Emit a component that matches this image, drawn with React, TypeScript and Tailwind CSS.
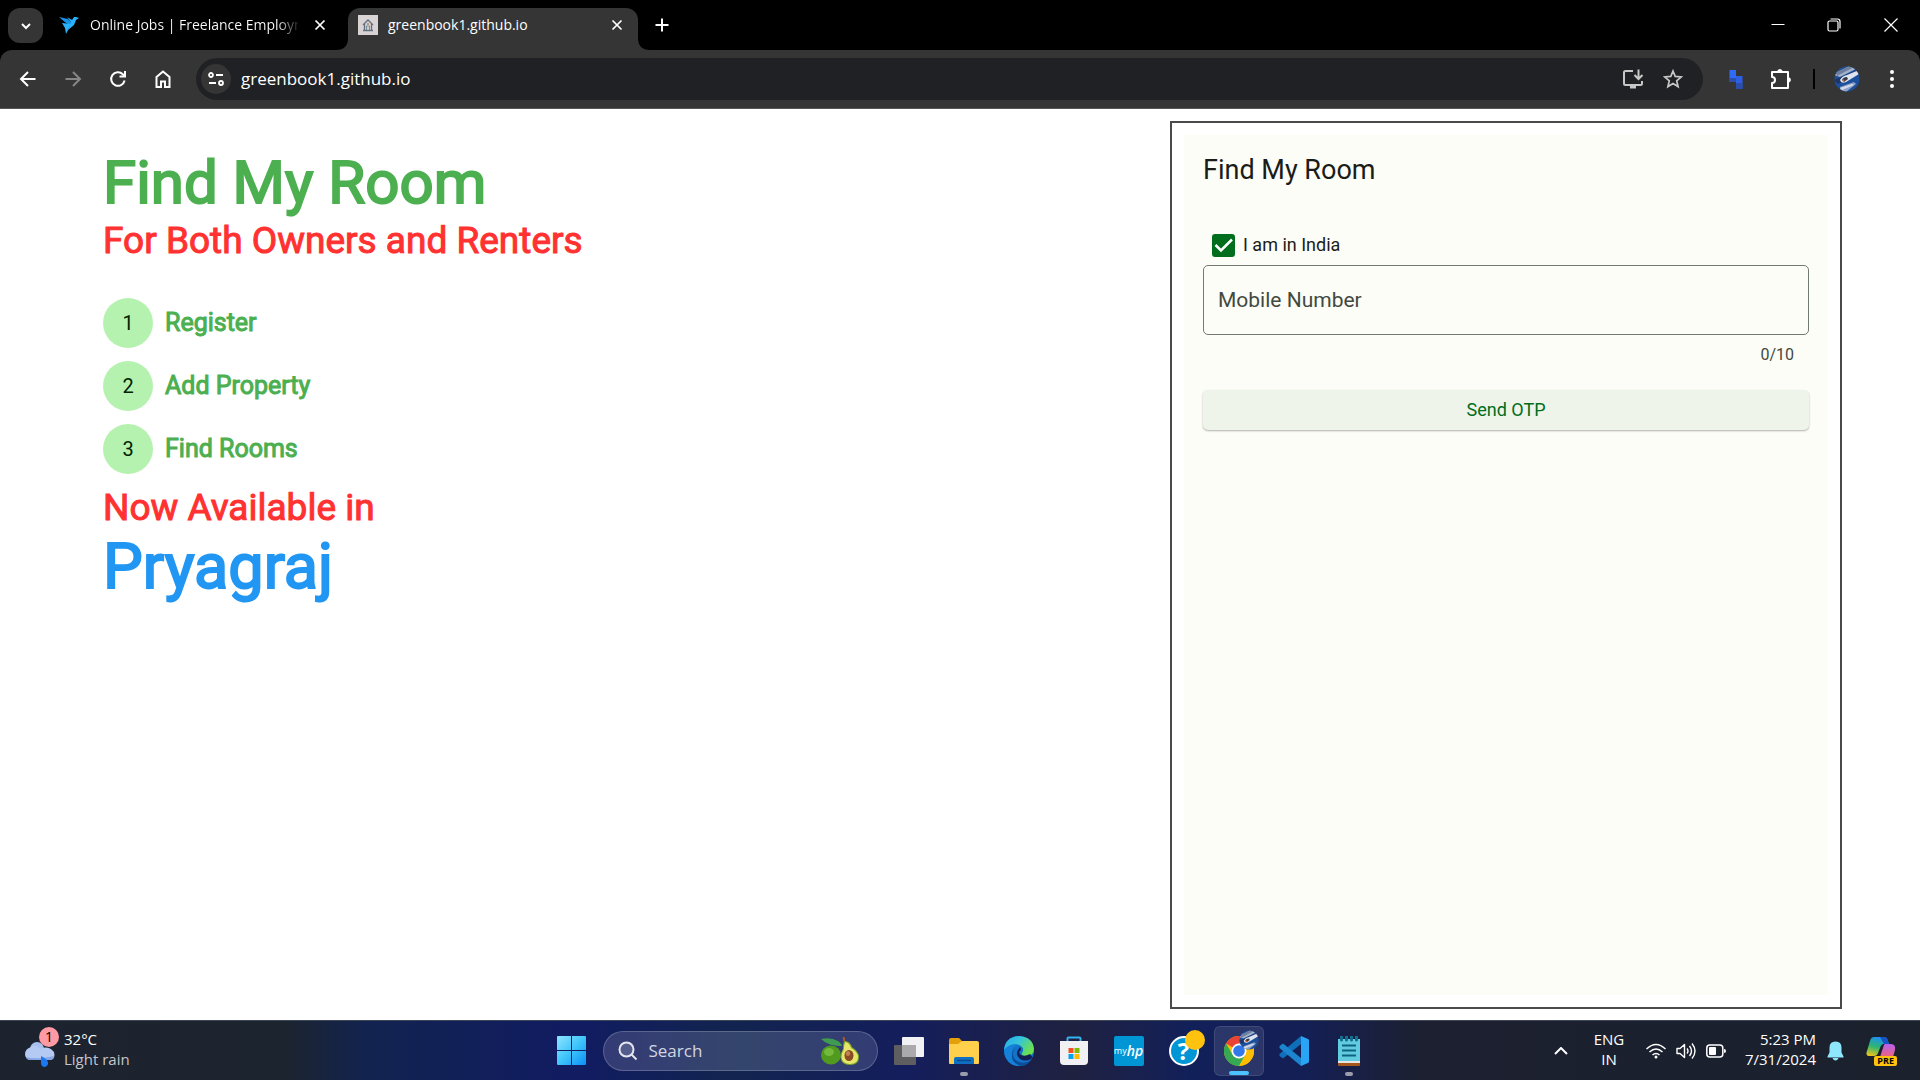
import { useState } from 'react';
import type { ReactNode } from 'react';

const steps = ['Register', 'Add Property', 'Find Rooms'];

function CloseIcon({ className }: { className?: string }) {
  return (
    <svg viewBox="0 0 12 12" className={className} fill="none" stroke="currentColor" strokeWidth="1.7">
      <path d="M1.5 1.5l9 9M10.5 1.5l-9 9" />
    </svg>
  );
}

function Avatar({ className }: { className?: string }) {
  return (
    <svg viewBox="0 0 26 26" className={className}>
      <defs>
        <clipPath id="avatar-clip">
          <circle cx="13" cy="13" r="12.5" />
        </clipPath>
      </defs>
      <g clipPath="url(#avatar-clip)">
        <rect width="26" height="26" fill="#1c4f9c" />
        <path d="M0 9L18-2l6 4L6 11z" fill="#a3b0c9" />
        <path d="M2 6L16 0l4 1L3 10z" fill="#6f7f9f" />
        <path d="M0 14L26 3v3L4 18z" fill="#1f3566" />
        <path d="M6 14q2-4 7-5l12-5v4L12 16q-5 2-6-2z" fill="#dfe4ee" />
        <path d="M8 14q1-3 5-3l1 2-4 3z" fill="#343a4a" />
        <circle cx="9.500" cy="14.500" r="1" fill="#e0632d" />
        <path d="M6 21l14-5 2 2-10 8H6z" fill="#8fa1c6" />
        <path d="M6 22l12-4 2 1-12 5z" fill="#d3dbeb" />
      </g>
    </svg>
  );
}

function TabStrip() {
  return (
    <div className="flex h-[50px] bg-black pl-2 text-white">
      <button aria-label="Search tabs" className="mt-2 flex h-[35px] w-[35px] items-center justify-center rounded-xl bg-[#353535]">
        <svg viewBox="0 0 12 12" className="h-3 w-3" fill="none" stroke="currentColor" strokeWidth="2">
          <path d="M2 4l4 4 4-4" />
        </svg>
      </button>

      <div className="ml-4 flex h-[50px] w-[289px] items-center pr-[22px]">
        <svg viewBox="0 0 20 20" className="h-5 w-5 shrink-0">
          <path d="M0 2l9 2 4 4-1 3-5-3z" fill="#1692e8" />
          <path d="M3 8l9 1-5 10-1-6z" fill="#29b2fe" />
          <path d="M8 2l5 3 2-3h2l3 1-3 2-2 5-6 5 3-8z" fill="#29b2fe" />
        </svg>
        <button className="ml-[11px] flex-1 overflow-hidden whitespace-nowrap bg-linear-to-r from-white from-90% to-[#222] bg-clip-text text-left text-sm leading-5 text-transparent">
          Online Jobs | Freelance Employm
        </button>
        <button aria-label="Close tab" className="ml-4">
          <CloseIcon className="h-3 w-3" />
        </button>
      </div>

      <div className="relative mt-2 flex h-[42px] w-[290px] items-center rounded-t-xl bg-[#353535] pb-2 pl-[10px]">
        <svg viewBox="0 0 12 12" className="absolute -left-3 bottom-0 h-3 w-3">
          <path d="M12 0v12H0Q12 12 12 0z" fill="#353535" />
        </svg>
        <svg viewBox="0 0 12 12" className="absolute -right-3 bottom-0 h-3 w-3">
          <path d="M0 0v12h12Q0 12 0 0z" fill="#353535" />
        </svg>
        <svg viewBox="0 0 20 20" className="h-5 w-5 shrink-0" fill="none">
          <rect width="20" height="20" fill="#d9d3d4" />
          <path d="M5 10l5-5 5 5M6.500 9v6M13.500 9v6M5 15.500h10" stroke="#60717f" strokeWidth="1.300" />
          <circle cx="10" cy="9" r="1" fill="#c08354" />
          <path d="M8.500 15v-4h3v4" stroke="#7b8a96" />
        </svg>
        <button className="ml-[10px] flex-1 text-left text-sm leading-5">greenbook1.github.io</button>
        <button aria-label="Close tab" className="mr-[15px]">
          <CloseIcon className="h-3 w-3" />
        </button>
      </div>

      <button aria-label="New tab" className="ml-[17px] h-[50px]">
        <svg viewBox="0 0 14 14" className="h-[14px] w-[14px]" stroke="currentColor" strokeWidth="2">
          <path d="M7 0.500v13M0.500 7h13" />
        </svg>
      </button>

      <div className="ml-auto flex h-[50px] items-center">
        <button aria-label="Minimize" className="flex h-[50px] w-14 items-center justify-center">
          <svg viewBox="0 0 14 14" className="h-[14px] w-[14px]" stroke="currentColor"><path d="M0.500 6.500h13" /></svg>
        </button>
        <button aria-label="Restore" className="flex h-[50px] w-14 items-center justify-center">
          <svg viewBox="0 0 14 14" className="h-[14px] w-[14px]" fill="none" stroke="currentColor" strokeWidth="1.200">
            <rect x="1" y="3" width="10" height="10" rx="1.500" />
            <path d="M3.500 1h7Q13 1 13 3.500v7" />
          </svg>
        </button>
        <button aria-label="Close" className="flex h-[50px] w-[58px] items-center justify-center">
          <svg viewBox="0 0 14 14" className="h-[14px] w-[14px]" stroke="currentColor" strokeWidth="1.200"><path d="M0.500 0.500l13 13M13.500 0.500l-13 13" /></svg>
        </button>
      </div>
    </div>
  );
}

function NavButton({ label, children, dim }: { label: string; children: ReactNode; dim?: boolean }) {
  return (
    <button aria-label={label} className={`flex h-10 w-[45px] items-center justify-center ${dim ? 'text-[#868686]' : 'text-white'}`}>
      <svg viewBox="0 0 20 20" className="h-5 w-5" fill="none" stroke="currentColor" strokeWidth="2">
        {children}
      </svg>
    </button>
  );
}

function Toolbar() {
  return (
    <div className="bg-black">
      <div className="flex h-[59px] items-center rounded-t-xl border-b border-[#5a5657] bg-[#353535] pl-[5px] text-white">
        <NavButton label="Back"><path d="M17.500 10H3.500M10 3l-7 7 7 7" /></NavButton>
        <NavButton label="Forward" dim><path d="M2.500 10h14M10 3l7 7-7 7" /></NavButton>
        <NavButton label="Reload">
          <path d="M16.600 11.500A6.800 6.800 0 1 1 14.800 5.200L16.500 7" />
          <path d="M17 2v5.500h-5.500" />
        </NavButton>
        <NavButton label="Home"><path d="M3.500 18V8L10 2.500 16.500 8v10h-4.500v-5.500H8V18z" /></NavButton>

        <div className="ml-[11px] flex h-[42px] flex-1 items-center rounded-full bg-[#202124] pl-[5px]">
          <button aria-label="View site information" className="flex h-[30px] w-[30px] items-center justify-center rounded-full bg-[#353535]">
            <svg viewBox="0 0 16 16" className="h-4 w-4" fill="none" stroke="currentColor" strokeWidth="1.800">
              <circle cx="3" cy="4" r="2" />
              <path d="M8 4h7M1 12h7" />
              <circle cx="13" cy="12" r="2" />
            </svg>
          </button>
          <input
            type="text"
            aria-label="Address"
            defaultValue="greenbook1.github.io"
            className="ml-[10px] flex-1 bg-transparent text-[17px] leading-6 text-white outline-none"
          />
          <button aria-label="Install app" className="flex w-10 justify-center text-[#c7c7c7]">
            <svg viewBox="0 0 22 20" className="h-5 w-[22px]" fill="none" stroke="currentColor" strokeWidth="2">
              <path d="M11 2H3.500Q2 2 2 3.500v11Q2 16 3.500 16h15q1.500 0 1.500-1.500V12" />
              <path d="M16.500 0.500v9M12.500 6l4 4 4-4" />
              <path d="M8 18h6" strokeWidth="3" />
            </svg>
          </button>
          <button aria-label="Bookmark this tab" className="mr-[10px] flex w-10 justify-center text-[#c7c7c7]">
            <svg viewBox="0 0 20 20" className="h-5 w-5" fill="none" stroke="currentColor" strokeWidth="1.700">
              <path d="M10 2l2.200 5.400 6.100.5-4.600 3.900 1.400 5.800-5.100-3.100-5.100 3.100 1.400-5.800L1.700 7.900l6.100-.5z" />
            </svg>
          </button>
        </div>

        <button aria-label="Extension" className="ml-[13px] flex w-10 justify-center">
          <svg viewBox="0 0 14 20" className="h-5 w-[14px]">
            <path d="M0.500 1h6.500v12H0.500z" fill="#2f6bf7" />
            <path d="M7 7h6.500v13H7z" fill="#2c5fe6" />
            <path d="M0.500 9h6.500v4H0.500zM7 14h6.500v6H7z" fill="#2a4ea9" />
          </svg>
        </button>
        <button aria-label="Extensions" className="ml-1 flex w-10 justify-center">
          <svg viewBox="0 0 22 22" className="h-[22px] w-[22px]" fill="none" stroke="currentColor" strokeWidth="2" strokeLinejoin="round">
            <path d="M3 4h16v16H3v-5a3 3 0 0 0 0-6z" />
            <path d="M8.500 4a2.400 2.400 0 0 1 4.800 0zM19 9.500a2.400 2.400 0 0 1 0 4.800z" fill="currentColor" strokeWidth="1" />
          </svg>
        </button>
        <span className="ml-[13px] h-5 w-[2px] bg-black" />
        <button aria-label="Profile" className="ml-[19px]">
          <Avatar className="h-[26px] w-[26px]" />
        </button>
        <button aria-label="Menu" className="ml-3 mr-2 flex w-10 justify-center">
          <svg viewBox="0 0 6 20" className="h-5 w-[6px]" fill="currentColor">
            <circle cx="3" cy="3" r="2" />
            <circle cx="3" cy="10" r="2" />
            <circle cx="3" cy="17" r="2" />
          </svg>
        </button>
      </div>
    </div>
  );
}

function Intro() {
  return (
    <section className="flex-1 pl-[103px] pt-[26px]">
      <h1 className="text-[60px] leading-[72px] text-[#4caf50] [-webkit-text-stroke:2px_#4caf50]">Find My Room</h1>
      <h2 className="text-[37px] leading-[44px] text-[#ff3131] [-webkit-text-stroke:1px_#ff3131]">For Both Owners and Renters</h2>
      <ol className="mt-[35px] flex flex-col gap-[13px]">
        {steps.map((step, i) => (
          <li key={step} className="flex items-center gap-3">
            <span className="flex h-[50px] w-[50px] items-center justify-center rounded-full bg-[#b6f2af] text-xl text-[#002203]">
              {i + 1}
            </span>
            <span className="text-[25px] leading-8 text-[#4caf50] [-webkit-text-stroke:1px_#4caf50]">{step}</span>
          </li>
        ))}
      </ol>
      <h2 className="mt-3 text-[37px] leading-[44px] text-[#ff3131] [-webkit-text-stroke:1px_#ff3131]">Now Available in</h2>
      <p className="text-[63px] leading-[74px] text-[#2196f3] [-webkit-text-stroke:2px_#2196f3]">Pryagraj</p>
    </section>
  );
}

function LoginPanel() {
  const [inIndia, setInIndia] = useState(true);
  const [mobile, setMobile] = useState('');

  return (
    <section className="w-[35vw] border-2 border-[#4a4a4a] p-3">
      <form className="flex h-full flex-col bg-[#fcfdf6] px-[19px] pt-[19px]" onSubmit={(e) => e.preventDefault()}>
        <h3 className="text-[27px] leading-8 text-[#1a1c19]">Find My Room</h3>

        <label className="mt-[47px] flex h-6 items-center pl-2 text-lg text-[#1a1c19]">
          <span className="grid h-6 w-6 place-items-center">
            <input
              type="checkbox"
              checked={inIndia}
              onChange={(e) => setInIndia(e.target.checked)}
              className="peer col-start-1 row-start-1 h-[23px] w-[23px] appearance-none rounded-[3px] border-2 border-[#006e1c] checked:bg-[#006e1c]"
            />
            <svg viewBox="0 0 23 23" className="pointer-events-none col-start-1 row-start-1 hidden h-[23px] w-[23px] peer-checked:block" fill="none" stroke="#fff" strokeWidth="2.500">
              <path d="M3.500 11l5.500 5.500L20 5.500" />
            </svg>
          </span>
          <span className="ml-2">I am in India</span>
        </label>

        <input
          type="tel"
          aria-label="Mobile Number"
          placeholder="Mobile Number"
          maxLength={10}
          value={mobile}
          onChange={(e) => setMobile(e.target.value)}
          className="mt-2 h-[70px] rounded-[5px] border border-[#72796f] bg-transparent px-[14px] text-[21px] text-[#1a1c19] outline-none placeholder:text-[#424940]"
        />
        <p className="mt-[10px] pr-[15px] text-right text-base leading-5 text-[#424940]">{mobile.length}/10</p>

        <button type="submit" className="mt-[25px] h-10 rounded-[5px] bg-[#eef4ea] text-lg text-[#006e1c] shadow-[0_1px_2px_rgba(0,0,0,0.3)]">
          Send OTP
        </button>
      </form>
    </section>
  );
}

function AppTile({ label, active, running, children }: { label: string; active?: boolean; running?: boolean; children: ReactNode }) {
  return (
    <button
      aria-label={label}
      className={`relative flex h-[50px] w-[50px] items-center justify-center rounded-md ${active ? 'border border-white/10 bg-white/10' : ''}`}
    >
      {children}
      {active && <span className="absolute bottom-0 h-1 w-5 rounded-full bg-[#4cc2ff]" />}
      {running && <span className="absolute bottom-0 h-1 w-2 rounded-full bg-[#9a9cab]" />}
    </button>
  );
}

function TaskbarApps() {
  return (
    <div className="flex items-center gap-[5px]">
      <AppTile label="Start">
        <svg viewBox="0 0 29 29" className="h-[29px] w-[29px]">
          <defs>
            <linearGradient id="start-fill" x1="0" y1="0" x2="1" y2="1">
              <stop offset="0" stopColor="#8fe5ff" />
              <stop offset="0.500" stopColor="#3fc5fb" />
              <stop offset="1" stopColor="#0c8ff5" />
            </linearGradient>
          </defs>
          <path d="M1 0h13v14H0V1q0-1 1-1zM15 0h13q1 0 1 1v13H15zM0 15h14v14H1q-1 0-1-1zM15 15h14v13q0 1-1 1H15z" fill="url(#start-fill)" />
        </svg>
      </AppTile>

      <label className="mx-px flex h-10 w-[275px] items-center rounded-full border border-white/20 bg-linear-to-r from-[#343b75] via-[#34456c] to-[#323c74] pl-[14px] pr-[18px]">
        <svg viewBox="0 0 20 20" className="h-5 w-5 shrink-0" fill="#525d8d" stroke="#e4e6ee" strokeWidth="2">
          <circle cx="8.500" cy="8.500" r="7" />
          <path d="M13.500 13.500l5 5" />
        </svg>
        <input type="text" aria-label="Search" placeholder="Search" className="ml-[11px] w-0 flex-1 bg-transparent text-[17px] text-white outline-none placeholder:text-[#d3d6e2]" />
        <svg viewBox="0 0 38 28" className="h-7 w-[38px] shrink-0">
          <ellipse cx="10" cy="18" rx="10" ry="9.500" fill="#4f9a1f" />
          <ellipse cx="8" cy="15" rx="5" ry="4" fill="#74b93b" />
          <path d="M0 2q10-2 17 2 4 3 4 5-8 0-13-2T0 2z" fill="#3f9a52" />
          <path d="M22.500 0l1.500 6" stroke="#a8562a" strokeWidth="2" />
          <path d="M24 4q5 0 7 6 7 5 7 10 0 8-9 8t-9.500-8q0-4 2.500-8 0-8 2-8z" fill="#7fa52c" />
          <path d="M24.500 5q4 1 5.500 6 7 4 7 9 0 7-8 7t-8.500-7q0-4 2.500-8 0-5 1.500-7z" fill="#e6e76a" />
          <ellipse cx="28" cy="18.500" rx="4.500" ry="5.500" fill="#8a4b25" />
          <ellipse cx="27" cy="16.500" rx="2.200" ry="2.500" fill="#c18254" />
        </svg>
      </label>

      <AppTile label="Task view">
        <svg viewBox="0 0 30 30" className="h-[30px] w-[30px]">
          <rect x="8" y="1" width="22" height="20" rx="1" fill="#f2f2f4" />
          <rect x="0" y="9" width="22" height="20" rx="1" fill="#5e5e60" />
          <path d="M8 9h14v12H8z" fill="#aaaaac" />
        </svg>
      </AppTile>

      <AppTile label="File Explorer" running>
        <svg viewBox="0 0 30 30" className="h-[30px] w-[30px]">
          <path d="M0 4q0-2 2-2h8l3 3v8H0z" fill="#e3a008" />
          <path d="M0 8h9l4-3h15q2 0 2 2v20q0 1-1 1H1q-1 0-1-1z" fill="#ffd04c" />
          <path d="M5 28v-5q0-2 2-2h16q2 0 2 2v5z" fill="#0f6fc2" />
          <path d="M8 24.500h14" stroke="#0a4c8c" strokeWidth="1.500" />
        </svg>
      </AppTile>

      <AppTile label="Microsoft Edge">
        <svg viewBox="0 0 30 30" className="h-[30px] w-[30px]">
          <defs>
            <linearGradient id="edge-top" x1="0" y1="0" x2="1" y2="0.500">
              <stop offset="0" stopColor="#28a8e8" />
              <stop offset="0.500" stopColor="#35c4dc" />
              <stop offset="1" stopColor="#6be04f" />
            </linearGradient>
          </defs>
          <circle cx="15" cy="15" r="15" fill="#1273c9" />
          <path d="M0 14Q1 1 15 0q14 1 15 13 0 7-8 7-5 0-4-3 3-4-1-7Q10 5 0 14z" fill="url(#edge-top)" />
          <path d="M0 14Q6 7 13 9q-6 3-5 10 2 8 9 11-15 1-17-16z" fill="#1581d8" />
          <path d="M11 12q-5 8 2 13 7 4 14-1-4 6-10 6Q7 27 8 19q0-4 3-7z" fill="#0b4f9c" />
          <path d="M14 14q-3 5 2 9 5 3 11 0l2-2q1 0 0 1l-3-4q-5 3-9 1-3-2-1-4 2-2 0-4z" fill="#142055" />
        </svg>
      </AppTile>

      <AppTile label="Microsoft Store">
        <svg viewBox="0 0 30 30" className="h-[30px] w-[30px]">
          <path d="M8.500 6V2.500Q8.500 1.500 9.500 1.500h11q1 0 1 1V6" fill="none" stroke="#36b0ef" strokeWidth="2" />
          <path d="M1 5h28v20q0 4-4 4H5q-4 0-4-4z" fill="#f1f1f3" />
          <path d="M9.500 12h5v5h-5z" fill="#f25022" />
          <path d="M15.500 12h5v5h-5z" fill="#7fba00" />
          <path d="M9.500 18h5v5h-5z" fill="#00a4ef" />
          <path d="M15.500 18h5v5h-5z" fill="#ffb900" />
        </svg>
      </AppTile>

      <AppTile label="myHP">
        <span className="flex h-[30px] w-[30px] items-center justify-center rounded-xs bg-[#0096d6] text-white">
          <span className="text-[9px] leading-4">my</span>
          <span className="text-sm font-semibold italic leading-4">hp</span>
        </span>
      </AppTile>

      <AppTile label="HP Support">
        <span className="flex h-[30px] w-[30px] items-center justify-center rounded-full border-2 border-white bg-[#0096d6] text-2xl font-bold leading-6 text-white">?</span>
        <span className="absolute right-1 top-1 h-5 w-5 rounded-full bg-[#ffc20e]" />
      </AppTile>

      <AppTile label="Google Chrome" active>
        <svg viewBox="0 0 30 30" className="h-[30px] w-[30px]">
          <circle cx="15" cy="15" r="15" fill="#fbbc04" />
          <path d="M15 15L2 7.500A15 15 0 0 1 28 7.500H15z" fill="#ea4335" />
          <path d="M2 7.500A15 15 0 0 0 15 30l6.500-11.500L15 15 8.500 18.500z" fill="#34a853" />
          <path d="M28 7.500A15 15 0 0 1 15 30l6.500-11L21 7.500z" fill="#fbbc04" />
          <circle cx="15" cy="15" r="7.500" fill="#fff" />
          <circle cx="15" cy="15" r="5.800" fill="#3178ea" />
        </svg>
        <Avatar className="absolute right-1 top-[3px] h-5 w-5" />
      </AppTile>

      <AppTile label="Visual Studio Code">
        <svg viewBox="0 0 30 30" className="h-[30px] w-[30px]">
          <path d="M22 0v8L4 22.500 0.500 20v-2z" fill="#0f6fb8" />
          <path d="M22 30v-8L4 7.500 0.500 10v2z" fill="#1b86cf" />
          <path d="M22 0l7 3q1 0 1 2v20q0 2-1 2l-7 3z" fill="#2aa4f4" />
        </svg>
      </AppTile>

      <AppTile label="Notepad" running>
        <svg viewBox="0 0 22 30" className="h-[30px] w-[22px]">
          <path d="M0 26h22v3q0 1-1 1H1q-1 0-1-1z" fill="#a5561d" />
          <path d="M0 25h22v2H0z" fill="#e8e6e4" />
          <path d="M0 3h22v22H0z" fill="#62cbe0" />
          <path d="M4 9.500h14M4 14.500h14M4 19.500h14" stroke="#0c6480" strokeWidth="2" />
          <path d="M3.500 0v4M8.500 0v4M13.500 0v4M18.500 0v4" stroke="#12708f" strokeWidth="3" strokeLinecap="round" />
        </svg>
      </AppTile>
    </div>
  );
}

function Tray() {
  return (
    <div className="flex items-center justify-end pr-6 text-[15px] leading-5 text-white">
      <button aria-label="Show hidden icons" className="flex w-[30px] justify-center">
        <svg viewBox="0 0 14 8" className="h-2 w-[14px]" fill="none" stroke="currentColor" strokeWidth="2"><path d="M1 7l6-6 6 6" /></svg>
      </button>
      <button className="ml-[11px] w-11 pb-1 text-center">ENG<br />IN</button>
      <button aria-label="Network, sound and battery" className="ml-[10px] flex items-center">
        <span className="flex w-[30px] justify-center">
          <svg viewBox="0 0 20 16" className="h-4 w-5" fill="none" stroke="currentColor" strokeWidth="1.500">
            <path d="M0.500 6Q10-3 19.500 6M3.500 9Q10 3 16.500 9M6.500 12q3.500-3 7 0" />
            <circle cx="10" cy="14" r="1.500" fill="currentColor" stroke="none" />
          </svg>
        </span>
        <span className="flex w-[30px] justify-center">
          <svg viewBox="0 0 20 18" className="h-[18px] w-5" fill="none" stroke="currentColor" strokeWidth="1.400">
            <path d="M1 6.500h3l4.500-4v13l-4.500-4H1z" strokeLinejoin="round" />
            <path d="M11 6.500q2 2.500 0 5M13.500 4q4 5 0 10M16 1.500q6 7.500 0 15" />
          </svg>
        </span>
        <span className="flex w-[30px] justify-center">
          <svg viewBox="0 0 20 14" className="h-[14px] w-5">
            <rect x="0.800" y="1" width="16" height="12" rx="3" fill="none" stroke="currentColor" strokeWidth="1.500" />
            <rect x="3" y="3" width="7" height="8" rx="1" fill="currentColor" />
            <path d="M18 5q2 0 2 2t-2 2z" fill="currentColor" />
          </svg>
        </span>
      </button>
      <button className="w-[85px] pb-1 text-right">5:23 PM<br />7/31/2024</button>
      <button aria-label="Notifications" className="ml-[11px]">
        <svg viewBox="0 0 17 20" className="h-5 w-[17px]" fill="#8fe7fd">
          <path d="M8.500 0.500q6 0 6 6v5l2 4v1H0.500v-1l2-4v-5q0-6 6-6z" />
          <path d="M5.500 17h6q-1 2.500-3 2.500t-3-2.500z" />
        </svg>
      </button>
      <button aria-label="Copilot" className="relative ml-[22px] h-[30px] w-[30px]">
        <svg viewBox="0 0 30 30" className="h-[30px] w-[30px]">
          <defs>
            <linearGradient id="copilot-left" x1="0.500" y1="0" x2="0.200" y2="1">
              <stop offset="0" stopColor="#1f8ff0" />
              <stop offset="0.500" stopColor="#2bb673" />
              <stop offset="1" stopColor="#f0c419" />
            </linearGradient>
            <linearGradient id="copilot-right" x1="0.500" y1="0" x2="0.500" y2="1">
              <stop offset="0" stopColor="#b561f0" />
              <stop offset="1" stopColor="#f0627a" />
            </linearGradient>
          </defs>
          <path d="M8 1h10q3 0 4 4l1 3h-5q-3 0-4 4l-2 5q-1 3-4 3H4q-5 0-3-5L4 5q1-4 4-4z" fill="url(#copilot-left)" />
          <path d="M14 1h4q3 0 4 4l1 3h-5z" fill="#1852c7" />
          <path d="M19 8h6q5 0 4 6l-2 7H14l3-9q1-4 2-4z" fill="url(#copilot-right)" />
        </svg>
        <span className="absolute -right-px bottom-0 rounded-xs bg-[#ffc20e] px-[3px] text-[9px] font-bold leading-[10px] text-black">PRE</span>
      </button>
    </div>
  );
}

function Taskbar() {
  return (
    <footer className="grid h-[60px] grid-cols-[1fr_auto_1fr] items-center border-t border-[#3c4657] bg-[linear-gradient(90deg,#1d232e_0%,#1c2430_15%,#12234f_19%,#111c62_30%,#12244f_38%,#141e5c_47%,#1f2140_56%,#12205a_62%,#141f55_68%,#1c2030_74%,#1b212d_100%)]">
      <button className="flex items-center pl-[25px] text-left text-[15px] leading-5 text-white">
        <span className="relative h-10 w-[30px]">
          <svg viewBox="0 0 30 40" className="h-10 w-[30px]">
            <circle cx="12" cy="18" r="7" fill="#a9c0ee" />
            <path d="M6 16q5-4 9 2 8-4 14 3 2 8-5 8H5q-5-1-5-6t6-7z" fill="#b4caf3" />
            <path d="M1 26q10 3 28-1-1 4-5 4H5q-3 0-4-3z" fill="#86a5e6" />
            <path d="M16 25q8 4 7 8-1 3-4 3-3-1-3-4z" fill="#1b78f0" />
          </svg>
          <span className="absolute -right-1 -top-1 flex h-5 w-5 items-center justify-center rounded-full bg-[#ff99a4] text-sm text-black">1</span>
        </span>
        <span className="ml-[9px] pb-1">
          32°C
          <br />
          <span className="text-[#c3c6cc]">Light rain</span>
        </span>
      </button>
      <TaskbarApps />
      <Tray />
    </footer>
  );
}

export default function App() {
  return (
    <div className="flex min-h-screen flex-col bg-white font-['Open_Sans',sans-serif]">
      <header>
        <TabStrip />
        <Toolbar />
      </header>
      <main className="flex flex-1 pb-[11px] pr-[78px] pt-3 font-[Roboto,sans-serif]">
        <Intro />
        <LoginPanel />
      </main>
      <Taskbar />
    </div>
  );
}
